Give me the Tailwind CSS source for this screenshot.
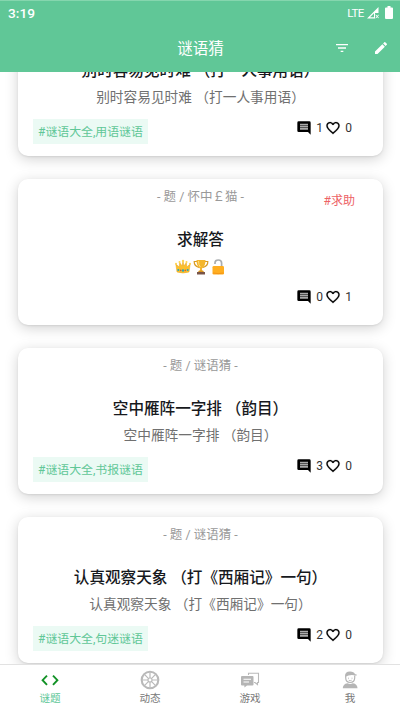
<!DOCTYPE html>
<html lang="zh-CN">
<head>
<meta charset="utf-8">
<title>谜语猜</title>
<script src="https://cdn.jsdelivr.net/npm/@tailwindcss/browser@4"></script>
</head>
<body class="bg-white">
<svg class="hidden">
  <symbol id="chat" viewBox="0 0 24 24"><path d="M4 4H20V17H4Z" fill="#aaa"/><path fill="#000" fill-rule="evenodd" d="M4 2h16a2 2 0 0 1 2 2v18l-4-4H4a2 2 0 0 1-2-2V4a2 2 0 0 1 2-2zm2 3.500v2.500h12v-2.500zm0 3.300v2.500h12v-2.500zm0 3.300v2.500h12v-2.500z"/></symbol>
  <symbol id="heart" viewBox="0 0 24 24"><path d="M16.500 3c-1.740 0-3.410.810-4.500 2.090C10.910 3.810 9.240 3 7.500 3 4.420 3 2 5.420 2 8.500c0 3.780 3.400 6.860 8.550 11.540L12 21.350l1.450-1.320C18.600 15.360 22 12.280 22 8.500 22 5.420 19.580 3 16.500 3zm-4.400 15.550l-.1.100-.1-.1C7.140 14.240 4 11.390 4 8.500 4 6.500 5.500 5 7.500 5c1.540 0 3.040.990 3.570 2.360h1.870C13.460 5.990 14.960 5 16.500 5c2 0 3.500 1.500 3.500 3.500 0 2.890-3.140 5.740-7.900 10.050z" fill="#000" stroke="#000" stroke-width=".3"/></symbol>
</svg>
<div class="flex h-[710px] w-[400px] flex-col overflow-hidden bg-white font-['Roboto','Noto_Sans_CJK_SC',sans-serif]">
  <header class="relative z-10 flex h-[72px] shrink-0 flex-col border-t border-[#85d6ae] bg-[#60c797] text-white">
    <div class="flex h-[23px] items-center justify-between pl-2 pr-[7px]">
      <span class="text-[13.700px] font-medium leading-4">3:19</span>
      <div class="flex items-center">
        <span class="text-[11.500px] leading-4 tracking-[-0.4px]">LTE</span>
        <svg class="ml-[3px] h-3 w-3" viewBox="0 0 12 12"><path d="M0 11.500L11.500 0V6H8v5.500z" fill="#fff"/><path d="M3 10.300L7 6.300V10.300z" fill="#60c797"/><path d="M8.700 7.800l3 3.400m0-3.400l-3 3.400" stroke="#fff" stroke-width="1"/></svg>
        <svg class="ml-[6px] h-[13px] w-2" viewBox="0 0 8 13"><path d="M1 1.500h1.500V0h3v1.500H7a1 1 0 0 1 1 1V12a1 1 0 0 1-1 1H1a1 1 0 0 1-1-1V2.500a1 1 0 0 1 1-1z" fill="#fff"/></svg>
      </div>
    </div>
    <div class="grid h-12 grid-cols-[1fr_auto_1fr] items-center">
      <span></span>
      <h1 class="pl-[1px] pt-[2px] text-[15.500px] font-normal leading-6">谜语猜</h1>
      <div class="flex items-center justify-end gap-[23px] pr-[11px]">
        <svg class="h-4 w-4" viewBox="0 0 24 24" fill="#fff"><path d="M10 18h4v-2h-4v2zM3 6v2h18V6H3zm3 7h12v-2H6v2z"/></svg>
        <svg class="h-4 w-4" viewBox="0 0 24 24" fill="#fff"><path d="M3 17.250V21h3.750L17.810 9.940l-3.750-3.750L3 17.250zM20.710 7.040a1 1 0 0 0 0-1.410l-2.340-2.340a1 1 0 0 0-1.410 0l-1.830 1.830 3.750 3.750 1.830-1.830z"/></svg>
      </div>
    </div>
  </header>

  <main class="h-[592px] shrink-0 overflow-hidden">
    <div class="-mt-[62px] flex flex-col gap-[23px] pl-[18px] pr-[17px]">
      <article class="flex h-[146px] flex-col rounded-[10px] bg-white pt-[8px] shadow-[0_3px_14px_rgba(0,0,0,0.18),0_1px_2px_rgba(0,0,0,0.08)]">
        <p class="h-5 text-center text-[12.500px] leading-5 text-[#999]">- 题 / 谜语猜 -</p>
        <h2 class="mt-[21px] h-6 whitespace-nowrap text-center text-[15.600px] font-medium leading-6 text-[#17191d]">别时容易见时难 （打一人事用语）</h2>
        <p class="mt-[4px] h-5 whitespace-nowrap text-center text-[13.700px] leading-5 text-[#707070]">别时容易见时难 （打一人事用语）</p>
        <div class="mt-[12px] flex items-start justify-between pl-[15px] pr-[31px]">
          <span class="h-[25px] w-[115px] whitespace-nowrap bg-[#ebfaf4] pt-[1px] text-center text-[11.900px] leading-[25px] text-[#60c797]">#谜语大全,用语谜语</span>
          <div class="flex h-[18px] items-center text-[12px] text-[#333]"><svg class="h-4 w-4"><use href="#chat"/></svg><span class="ml-[4.500px] w-[7px] text-center">1</span><svg class="ml-[1.500px] h-4 w-4"><use href="#heart"/></svg><span class="ml-[4.500px] w-[7px] text-center">0</span></div>
        </div>
      </article>
      <article class="relative flex h-[146px] flex-col rounded-[10px] bg-white pt-[8px] shadow-[0_3px_14px_rgba(0,0,0,0.18),0_1px_2px_rgba(0,0,0,0.08)]">
        <span class="absolute right-[28px] top-[12px] text-[12px] leading-5 text-[#ed6265]">#求助</span>
        <p class="h-5 text-center text-[12.500px] leading-5 text-[#999]">- 题 / 怀中￡猫 -</p>
        <h2 class="mt-[21px] h-6 text-center text-[15.600px] font-medium leading-6 text-[#17191d]">求解答</h2>
        <div class="mt-[5px] flex h-5 items-center justify-center gap-[1.500px]">
          <svg class="h-4 w-4" viewBox="0 0 16 16"><path d="M2 13L.8 5l3.400 3L4.700 3.500 7 7l1-5 1 5 2.300-3.500.5 4.500 3.400-3L14 13q-6 2-12 0z" fill="#fbc02d" stroke="#e9a51d" stroke-width=".5"/><g fill="#ffd54f"><circle cx="1" cy="4.700" r="1"/><circle cx="4.500" cy="3" r="1"/><circle cx="8" cy="2" r="1.200"/><circle cx="11.500" cy="3" r="1"/><circle cx="15" cy="4.700" r="1"/></g><g fill="#28a8b8"><circle cx="3.300" cy="11" r="1"/><circle cx="8" cy="11.500" r="1.200"/><circle cx="12.700" cy="11" r="1"/></g><circle cx="5.700" cy="11.400" r=".8" fill="#db5437"/><circle cx="10.300" cy="11.400" r=".8" fill="#db5437"/></svg>
          <svg class="h-4 w-4" viewBox="0 0 16 16"><path d="M4 2.500H1.200Q1 7 6 8.500M12 2.500h2.800Q15 7 10 8.500" fill="none" stroke="#d99b20" stroke-width="1.200"/><path d="M3.500 1h9Q12.500 7.500 9 9.500v2.500H7V9.500Q3.500 7.500 3.500 1z" fill="#f4b62c"/><path d="M5.500 2q0 4 1.800 6" fill="none" stroke="#ffe082"/><path d="M6 11.500h4l1 1.500H5z" fill="#d8941d"/><path d="M4 13h8v2.500H4z" fill="#795548"/></svg>
          <svg class="h-4 w-4" viewBox="0 0 16 16"><path d="M5 5V4q0-3 3.300-3t3.300 3v4" fill="none" stroke="#a9adb0" stroke-width="1.700"/><rect x="2.500" y="7" width="11.500" height="8.500" rx="1.300" fill="#ffae20"/><path d="M3 14q5 1.300 10.500 0" fill="none" stroke="#f59515" stroke-width="1"/></svg>
        </div>
        <div class="mt-[11px] flex justify-end pr-[31px]">
          <div class="flex h-[18px] items-center text-[12px] text-[#333]"><svg class="h-4 w-4"><use href="#chat"/></svg><span class="ml-[4.500px] w-[7px] text-center">0</span><svg class="ml-[1.500px] h-4 w-4"><use href="#heart"/></svg><span class="ml-[4.500px] w-[7px] text-center">1</span></div>
        </div>
      </article>
      <article class="flex h-[146px] flex-col rounded-[10px] bg-white pt-[8px] shadow-[0_3px_14px_rgba(0,0,0,0.18),0_1px_2px_rgba(0,0,0,0.08)]">
        <p class="h-5 text-center text-[12.500px] leading-5 text-[#999]">- 题 / 谜语猜 -</p>
        <h2 class="mt-[21px] h-6 whitespace-nowrap text-center text-[15.600px] font-medium leading-6 text-[#17191d]">空中雁阵一字排 （韵目）</h2>
        <p class="mt-[4px] h-5 whitespace-nowrap text-center text-[13.700px] leading-5 text-[#707070]">空中雁阵一字排 （韵目）</p>
        <div class="mt-[12px] flex items-start justify-between pl-[15px] pr-[31px]">
          <span class="h-[25px] w-[115px] whitespace-nowrap bg-[#ebfaf4] pt-[1px] text-center text-[11.900px] leading-[25px] text-[#60c797]">#谜语大全,书报谜语</span>
          <div class="flex h-[18px] items-center text-[12px] text-[#333]"><svg class="h-4 w-4"><use href="#chat"/></svg><span class="ml-[4.500px] w-[7px] text-center">3</span><svg class="ml-[1.500px] h-4 w-4"><use href="#heart"/></svg><span class="ml-[4.500px] w-[7px] text-center">0</span></div>
        </div>
      </article>
      <article class="flex h-[146px] flex-col rounded-[10px] bg-white pt-[8px] shadow-[0_3px_14px_rgba(0,0,0,0.18),0_1px_2px_rgba(0,0,0,0.08)]">
        <p class="h-5 text-center text-[12.500px] leading-5 text-[#999]">- 题 / 谜语猜 -</p>
        <h2 class="mt-[21px] h-6 whitespace-nowrap text-center text-[15.600px] font-medium leading-6 text-[#17191d]">认真观察天象 （打《西厢记》一句）</h2>
        <p class="mt-[4px] h-5 whitespace-nowrap text-center text-[13.700px] leading-5 text-[#707070]">认真观察天象 （打《西厢记》一句）</p>
        <div class="mt-[12px] flex items-start justify-between pl-[15px] pr-[31px]">
          <span class="h-[25px] w-[115px] whitespace-nowrap bg-[#ebfaf4] pt-[1px] text-center text-[11.900px] leading-[25px] text-[#60c797]">#谜语大全,句迷谜语</span>
          <div class="flex h-[18px] items-center text-[12px] text-[#333]"><svg class="h-4 w-4"><use href="#chat"/></svg><span class="ml-[4.500px] w-[7px] text-center">2</span><svg class="ml-[1.500px] h-4 w-4"><use href="#heart"/></svg><span class="ml-[4.500px] w-[7px] text-center">0</span></div>
        </div>
      </article>
    </div>
  </main>

  <nav class="grid h-[46px] shrink-0 grid-cols-4 border-t border-[#e2e2e2] bg-white text-[10.600px] leading-4 text-[#777]">
    <a class="flex flex-col items-center gap-[1px] pt-[5px] text-[#60c797]">
      <svg class="h-5 w-5" viewBox="0 0 20 20" fill="none" stroke="#129226" stroke-width="1.900"><path d="M7 5.600L2.600 10.200 7 14.800M13 5.600l4.400 4.600L13 14.800"/></svg>
      <span>谜题</span>
    </a>
    <a class="flex flex-col items-center gap-[1px] pt-[5px]">
      <svg class="h-5 w-5" viewBox="0 0 20 20" fill="none" stroke="#b9b9b9"><circle cx="10" cy="10" r="8.300" stroke-width="2.100"/><circle cx="10" cy="10" r="2" stroke-width="1.100"/><path d="M10 2.500V8M10 12v5.500M2.500 10H8M12 10h5.500M4.700 4.700l3.900 3.900M11.400 11.400l3.900 3.900M15.300 4.700l-3.900 3.900M8.600 11.400l-3.900 3.900" stroke-width="1.200"/></svg>
      <span>动态</span>
    </a>
    <a class="flex flex-col items-center gap-[1px] pt-[5px]">
      <svg class="h-5 w-5" viewBox="0 0 20 20"><path d="M8.500 5V3.200H18.500v9.300h-1v2L15 12.500H14" fill="none" stroke="#b9b9b9" stroke-width="1.100"/><path d="M2 6h10.500a1 1 0 0 1 1 1v7.500a1 1 0 0 1-1 1H7l-2.600 2v-2H2a1 1 0 0 1-1-1V7a1 1 0 0 1 1-1z" fill="#b5b5b5"/><path d="M3.500 9.200H11M3.500 12H9" stroke="#fff" stroke-width="1.100"/></svg>
      <span>游戏</span>
    </a>
    <a class="flex flex-col items-center gap-[1px] pt-[5px]">
      <svg class="h-5 w-5" viewBox="0 0 20 20"><path d="M5.700 5.500v2.300q0 4.700 4.500 4.700t4.500-4.700V5.500" fill="#fff" stroke="#b5b5b5" stroke-width="1.200"/><path d="M5 6.500Q4.800 1.500 10 1.500q4 0 5 2.700h1.500v1.500Q12 4.500 8.500 5.500L6 6.500z" fill="#b5b5b5"/><path d="M8.500 7.700v1m3.500-1v1M8.700 10.200q1.500 1 3 0" fill="none" stroke="#b5b5b5" stroke-width=".9"/><path d="M2.800 18.300q0-4.300 4.700-5.100 2.700 1.400 5.400 0 4.600.800 4.600 5.100z" fill="#b5b5b5"/></svg>
      <span>我</span>
    </a>
  </nav>
</div>
</body>
</html>
